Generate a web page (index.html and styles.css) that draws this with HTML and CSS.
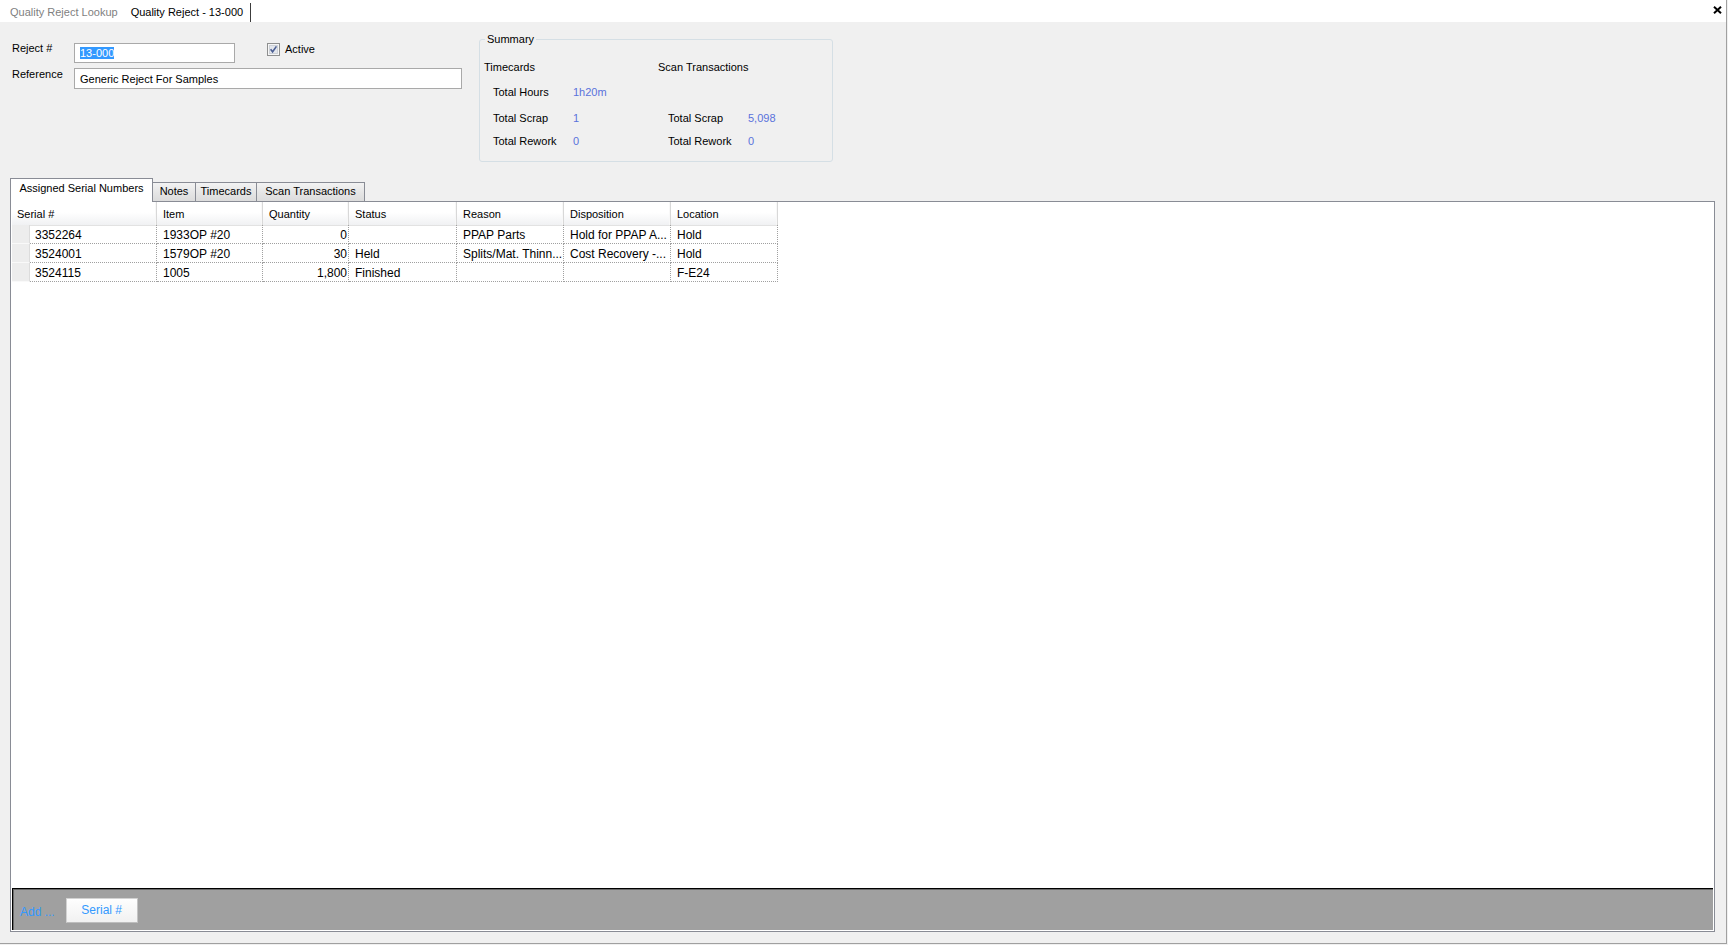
FILE: index.html
```html
<!DOCTYPE html>
<html>
<head>
<meta charset="utf-8">
<title>Quality Reject - 13-000</title>
<link rel="stylesheet" href="styles.css">
</head>
<body>
<div class="app">
  <div class="topbar">
    <div class="doc-tab inactive">Quality Reject Lookup</div>
    <div class="doc-tab active">Quality Reject - 13-000</div>
    <div class="close">
      <svg width="9" height="8" viewBox="0 0 9 8"><path d="M1 0.8 L8 7.2 M8 0.8 L1 7.2" stroke="#000" stroke-width="2" fill="none"/></svg>
    </div>
  </div>

  <div class="header">
    <div class="form">
      <div class="frow r1">
        <span class="lbl">Reject #</span>
        <div class="textbox tb-short"><span class="sel">13-000</span></div>
        <div class="check">
          <svg width="13" height="13" viewBox="0 0 13 13"><rect x="0.5" y="0.5" width="12" height="12" fill="#f6f6f6" stroke="#8e8f8f"/><rect x="2.5" y="2.5" width="8" height="8" fill="#e3e6ec" stroke="#cdd1d7"/><path d="M3.6 6.2 L5.6 8.8 L9.4 3.4" fill="none" stroke="#4c5f93" stroke-width="1.6"/></svg>
          <span class="check-lbl">Active</span>
        </div>
      </div>
      <div class="frow r2">
        <span class="lbl">Reference</span>
        <div class="textbox tb-long">Generic Reject For Samples</div>
      </div>
    </div>

    <fieldset class="summary">
      <legend>Summary</legend>
      <div class="sum-grid">
        <div class="sum-head">Timecards</div>
        <div></div>
        <div class="sum-head">Scan Transactions</div>
        <div></div>

        <div class="sl">Total Hours</div>
        <div class="sv">1h20m</div>
        <div></div>
        <div></div>

        <div class="sl">Total Scrap</div>
        <div class="sv">1</div>
        <div class="sl sr">Total Scrap</div>
        <div class="sv">5,098</div>

        <div class="sl">Total Rework</div>
        <div class="sv">0</div>
        <div class="sl sr">Total Rework</div>
        <div class="sv">0</div>
      </div>
    </fieldset>
  </div>

  <div class="tabs">
    <div class="tab selected">Assigned Serial Numbers</div>
    <div class="tab t-notes">Notes</div>
    <div class="tab t-time">Timecards</div>
    <div class="tab t-scan">Scan Transactions</div>
  </div>

  <div class="panel">
    <div class="grid">
      <div class="grow ghead">
        <div class="hc hc-first">Serial #</div>
        <div class="hc">Item</div>
        <div class="hc">Quantity</div>
        <div class="hc">Status</div>
        <div class="hc">Reason</div>
        <div class="hc">Disposition</div>
        <div class="hc">Location</div>
      </div>
      <div class="grow">
        <div class="rh"></div>
        <div class="c c-serial">3352264</div>
        <div class="c">1933OP #20</div>
        <div class="c num">0</div>
        <div class="c"></div>
        <div class="c">PPAP Parts</div>
        <div class="c">Hold for PPAP A...</div>
        <div class="c">Hold</div>
      </div>
      <div class="grow">
        <div class="rh"></div>
        <div class="c c-serial">3524001</div>
        <div class="c">1579OP #20</div>
        <div class="c num">30</div>
        <div class="c">Held</div>
        <div class="c">Splits/Mat. Thinn...</div>
        <div class="c">Cost Recovery -...</div>
        <div class="c">Hold</div>
      </div>
      <div class="grow">
        <div class="rh"></div>
        <div class="c c-serial">3524115</div>
        <div class="c">1005</div>
        <div class="c num">1,800</div>
        <div class="c">Finished</div>
        <div class="c"></div>
        <div class="c"></div>
        <div class="c">F-E24</div>
      </div>
    </div>
    <div class="bottombar">
      <span class="add">Add ...</span>
      <div class="btn">Serial #</div>
    </div>
  </div>
</div>
</body>
</html>
```

FILE: styles.css
```css
* {
  box-sizing: border-box;
}

body {
  margin: 0;
  background: #f0f0f0;
  font-family: "Liberation Sans", Arial, sans-serif;
  font-size: 11px;
  color: #000;
}

.app {
  width: 1727px;
  height: 944px;
  border-right: 1px solid #a0a0a0;
  border-bottom: 1px solid #a0a0a0;
  display: flex;
  flex-direction: column;
  overflow: hidden;
}

/* ---------- top document tabs ---------- */
.topbar {
  height: 22px;
  flex: none;
  background: #fff;
  display: flex;
  align-items: flex-end;
  padding-right: 4px;
}

.doc-tab {
  height: 19px;
  line-height: 14px;
  padding-top: 2px;
  white-space: nowrap;
}

.doc-tab.inactive {
  color: #7f7f7f;
  padding-left: 10px;
  padding-right: 9px;
}

.doc-tab.active {
  padding-left: 4px;
  padding-right: 7px;
  border-right: 1px solid #3c3c3c;
}

.close {
  margin-left: auto;
  align-self: center;
  display: flex;
  height: 8px;
  margin-top: -3px;
}

/* ---------- header form ---------- */
.header {
  height: 156px;
  flex: none;
  display: flex;
  align-items: flex-start;
}

.form {
  width: 462px;
  padding-left: 12px;
  padding-top: 21px;
}

.frow {
  display: flex;
  align-items: flex-start;
}

.r2 {
  margin-top: 5px;
}

.lbl {
  width: 62px;
  line-height: 13px;
  flex: none;
}

.r1 .lbl {
  margin-top: -1px;
}

.textbox {
  background: #fff;
  border: 1px solid #a9a9a9;
  display: flex;
  align-items: center;
  padding-left: 5px;
  white-space: nowrap;
}

.tb-short {
  width: 161px;
  height: 20px;
}

.tb-long {
  width: 388px;
  height: 21px;
  padding-top: 1px;
}

.sel {
  background: #3399ff;
  color: #fff;
  line-height: 12px;
  height: 12px;
}

.check {
  margin-left: 32px;
  display: flex;
  align-items: center;
  height: 13px;
}

.check svg {
  display: block;
}

.check-lbl {
  margin-left: 5px;
  line-height: 13px;
  margin-top: -1px;
}

/* ---------- summary group ---------- */
.summary {
  margin: 11px 0 0 17px;
  width: 354px;
  border: 1px solid #d5dfe5;
  border-radius: 3px;
  padding: 15px 0 7px 4px;
  min-inline-size: 0;
}

.summary legend {
  margin-left: 1px;
  padding: 0 2px;
  line-height: 13px;
  font-size: 11px;
}

.sum-grid {
  display: grid;
  grid-template-columns: 89px 85px 90px auto;
  grid-template-rows: 25px 26px 23px 19px;
  line-height: 13px;
}

.sl {
  padding-left: 9px;
  white-space: nowrap;
}

.sl.sr {
  padding-left: 10px;
}

.sv {
  color: #5a72dc;
}

.sum-head {
  white-space: nowrap;
}

/* ---------- tabs ---------- */
.tabs {
  height: 23px;
  flex: none;
  display: flex;
  align-items: flex-end;
  padding-left: 10px;
}

.tab {
  height: 19px;
  border: 1px solid #898c95;
  border-bottom: 0;
  background: linear-gradient(#f3f3f3, #e6e6e6 50%, #dcdcdc);
  text-align: center;
  line-height: 13px;
  padding-top: 2px;
  white-space: nowrap;
  margin-left: -1px;
}

.tab.selected {
  width: 143px;
  height: 24px;
  margin-left: 0;
  margin-bottom: -1px;
  padding-top: 3px;
  background: #fff;
  position: relative;
  z-index: 1;
}

.t-notes { width: 44px; }
.t-time { width: 62px; }
.t-scan { width: 109px; }

/* ---------- panel ---------- */
.panel {
  margin-left: 10px;
  width: 1705px;
  height: 731px;
  flex: none;
  border: 1px solid #898c95;
  background: #fff;
  padding: 0 1px 1px 1px;
  display: flex;
  flex-direction: column;
}

.grid {
  flex: 1;
}

.grow {
  display: grid;
  grid-template-columns: 18px 127px 106px 86px 108px 107px 107px 107px;
  height: 19px;
}

.ghead {
  height: 23px;
}

.hc {
  background: linear-gradient(#ffffff, #ffffff 45%, #f0f1f3);
  border-right: 1px solid #d8d8d8;
  border-bottom: 1px solid #e2e2e2;
  padding-left: 6px;
  padding-top: 1px;
  line-height: 22px;
  white-space: nowrap;
  box-shadow: inset -1px 0 0 #f8f8f8;
}

.hc-first {
  grid-column: span 2;
  padding-left: 5px;
}

.rh {
  background: #ededed;
  border-bottom: 1px solid #f9f9f9;
  border-right: 1px solid #dcdcdc;
}

.c {
  font-size: 12px;
  line-height: 18px;
  padding-top: 1px;
  padding-left: 6px;
  border-right: 1px dotted #a0a0a0;
  border-bottom: 1px dotted #a0a0a0;
  white-space: nowrap;
  overflow: hidden;
}

.c-serial {
  padding-left: 5px;
}

.c.num {
  text-align: right;
  padding-right: 1px;
  padding-left: 0;
}

/* ---------- bottom bar ---------- */
.bottombar {
  height: 42px;
  flex: none;
  background: #a0a0a0;
  border-top: 1px solid #000;
  border-left: 1px solid #000;
  box-shadow: inset 1px 1px 0 #6a6a6a;
  display: flex;
  align-items: center;
  padding-left: 7px;
  padding-top: 2px;
}

.add {
  color: #3399ff;
  font-size: 12px;
  margin-top: 3px;
}

.btn {
  margin-left: 11px;
  width: 72px;
  height: 25px;
  background: linear-gradient(#fefefe, #f1f1f1);
  border: 1px solid #d2d2d2;
  border-right-color: #c4c4c4;
  border-bottom-color: #bdbdbd;
  color: #3399ff;
  font-size: 12px;
  text-align: center;
  line-height: 23px;
}
```
